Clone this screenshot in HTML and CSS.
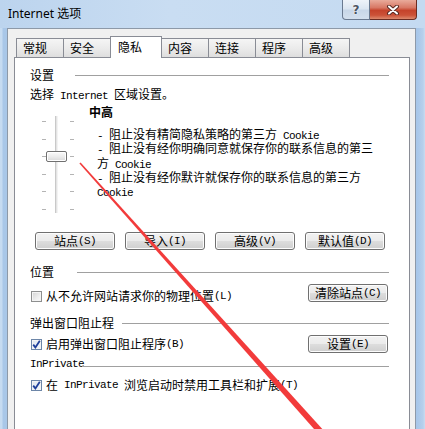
FILE: index.html
```html
<!DOCTYPE html>
<html lang="zh-CN">
<head>
<meta charset="utf-8">
<title>Internet 选项</title>
<link rel="stylesheet" href="styles.css">
</head>
<body>
<div class="window">
  <div class="titlebar">
    <span class="title">Internet 选项</span>
    <div class="caption-btns">
      <div class="cbtn help">?</div>
      <div class="cbtn close">
        <svg width="14" height="10" viewBox="0 0 14 10">
          <path d="M3 1.5 L11 8.5 M11 1.5 L3 8.5" stroke="#5a2a22" stroke-width="4" stroke-linecap="round" fill="none"/>
          <path d="M3 1.5 L11 8.5 M11 1.5 L3 8.5" stroke="#ffffff" stroke-width="2" stroke-linecap="round" fill="none"/>
        </svg>
      </div>
    </div>
  </div>
  <div class="client">
    <div class="tabs">
      <div class="tab">常规</div>
      <div class="tab">安全</div>
      <div class="tab active">隐私</div>
      <div class="tab">内容</div>
      <div class="tab">连接</div>
      <div class="tab">程序</div>
      <div class="tab">高级</div>
    </div>
    <div class="panel">
      <div class="gh"><span class="gh-label w45">设置</span><span class="gh-line"></span></div>
      <div class="line">选择<span class="m"> Internet </span>区域设置。</div>
      <div class="privacy">
        <div class="slider">
          <div class="ticks">
            <div class="tick-row"><i></i><i></i></div>
            <div class="tick-row"><i></i><i></i></div>
            <div class="tick-row"><i></i><i></i></div>
            <div class="tick-row"><i></i><i></i></div>
            <div class="tick-row"><i></i><i></i></div>
            <div class="tick-row"><i></i><i></i></div>
          </div>
          <div class="thumb"></div>
        </div>
        <div class="desc">
          <div class="level">中高</div>
          <div class="items">
            <p class="item"><span class="m">- </span>阻止没有精简隐私策略的第三方<span class="m"> Cookie</span></p>
            <p class="item"><span class="m">- </span>阻止没有经你明确同意就保存你的联系信息的第三<br>方<span class="m"> Cookie</span></p>
            <p class="item"><span class="m">- </span>阻止没有经你默许就保存你的联系信息的第三方<br><span class="m">Cookie</span></p>
          </div>
        </div>
      </div>
      <div class="btn-row">
        <div class="btn">站点<span class="m">(S)</span></div>
        <div class="btn">导入<span class="m">(I)</span></div>
        <div class="btn">高级<span class="m">(V)</span></div>
        <div class="btn">默认值<span class="m">(D)</span></div>
      </div>

      <div class="gh gap14"><span class="gh-label w47">位置</span><span class="gh-line"></span></div>
      <div class="optrow">
        <div class="check off6">
          <span class="cb"></span>从不允许网站请求你的物理位置<span class="m">(L)</span>
        </div>
        <div class="btn side">清除站点<span class="m">(C)</span></div>
      </div>

      <div class="gh gap13"><span class="gh-label w92">弹出窗口阻止程</span><span class="gh-line"></span></div>
      <div class="optrow">
        <div class="check off3">
          <span class="cb on"><svg width="9" height="9" viewBox="0 0 9 9"><path d="M1.2 4.6 L3.4 7.4 L7.8 0.8" stroke="#1f3f9a" stroke-width="1.8" fill="none"/></svg></span>启用弹出窗口阻止程序<span class="m">(B)</span>
        </div>
        <div class="btn side">设置<span class="m">(E)</span></div>
      </div>

      <div class="gh gap3"><span class="gh-label w52 m">InPrivate</span><span class="gh-line low"></span></div>
      <div class="check solo">
        <span class="cb on"><svg width="9" height="9" viewBox="0 0 9 9"><path d="M1.2 4.6 L3.4 7.4 L7.8 0.8" stroke="#1f3f9a" stroke-width="1.8" fill="none"/></svg></span>在<span class="m"> InPrivate </span>浏览启动时禁用工具栏和扩展<span class="m">(T)</span>
      </div>
    </div>
  </div>
  <svg class="annot" width="425" height="429" viewBox="0 0 425 429">
    <polygon points="79.4,163.5 80.6,162.5 330.4,437.9 325.6,442.1" fill="#f23b3b"/>
  </svg>
</div>
</body>
</html>
```

FILE: styles.css
```css
* { box-sizing: border-box; }
html, body { margin: 0; padding: 0; }
body {
  width: 425px;
  height: 429px;
  overflow: hidden;
  font-family: "Noto Sans CJK SC", sans-serif;
  font-size: 12px;
  color: #000;
  background: #b9d1ea;
}
.window {
  position: relative;
  width: 425px;
  height: 429px;
  display: flex;
  flex-direction: column;
  background: linear-gradient(to right, #c6dbf1 0, #c6dbf1 2px, #a9c7e8 3px, #a9c7e8 7px, #a9c7e8 416px, #a7c6e9 417px, #b6d0ec 423px, #c9dcf0 425px);
}
.titlebar {
  height: 28px;
  display: flex;
  align-items: flex-start;
  background: linear-gradient(to bottom, #cadef3 0, #c2d8f0 50%, #b4cfec 100%);
  background: linear-gradient(to right, #bcd4ee 0, #c9ddf2 40%, #c4daf1 100%);
}
.title {
  font-family: "Noto Sans", "Noto Sans CJK SC", sans-serif;
  font-size: 12px;
  line-height: 16px;
  margin: 6px 0 0 8px;
  color: #000;
}
.caption-btns {
  margin-left: auto;
  margin-right: 8px;
  display: flex;
  height: 20px;
}
.cbtn {
  height: 20px;
  display: flex;
  align-items: center;
  justify-content: center;
}
.help {
  width: 28px;
  border: 1px solid #6a7a90;
  border-top: none;
  border-radius: 0 0 0 4px;
  background: linear-gradient(to bottom, #eef3f9 0, #dce6f1 45%, #c8d7e8 55%, #d3e0ee 100%);
  font-family: "DejaVu Sans", sans-serif;
  font-weight: bold;
  font-size: 12px;
  color: #4b5563;
  text-shadow: 0 0 2px #fff, 0 0 1px #fff;
}
.close {
  width: 47px;
  border: 1px solid #6b2c22;
  border-top: none;
  border-left: none;
  border-radius: 0 0 4px 0;
  background: linear-gradient(to bottom, #e9ab9b 0, #d87865 40%, #c5432b 55%, #cc5238 80%, #dd8a6e 100%);
}
.client {
  flex: 1;
  margin: 0 9px 0 7px;
  background: #f0f0f0;
  border: 1px solid #8d99a8;
  border-bottom: none;
  padding: 7px 5px 0 6px;
  display: flex;
  flex-direction: column;
}
.tabs {
  display: flex;
  align-items: flex-end;
  height: 21px;
  padding-left: 2px;
}
.tab {
  width: 48px;
  height: 19px;
  margin-right: -1px;
  border: 1px solid #898c95;
  border-bottom: none;
  background: linear-gradient(to bottom, #f5f5f5 0, #ebebeb 50%, #dedede 100%);
  padding-left: 6px;
  display: flex;
  align-items: center;
  font-size: 12px;
  line-height: 14px;
}
.tab.active {
  width: 52px;
  height: 22px;
  margin-bottom: -1px;
  position: relative;
  z-index: 2;
  background: #fff;
  padding-left: 7px;
  padding-bottom: 2px;
}
.panel {
  flex: 1;
  background: #fff;
  border: 1px solid #898c95;
  border-bottom: none;
  padding: 9px 20px 0 15px;
}
.m {
  font-family: "Liberation Mono", monospace;
  font-size: 11px;
  letter-spacing: -0.6px;
  white-space: pre;
}
.gh {
  display: flex;
  align-items: center;
  height: 16px;
  line-height: 16px;
}
.gh-label { flex: none; white-space: nowrap; }
.w45 { width: 45px; }
.w47 { width: 47px; }
.w92 { width: 92px; }
.w52 { width: 52px; }
.gh-line {
  flex: 1;
  height: 1px;
  background: #a0a0a0;
}
.gh-line.low { margin-top: 4px; }
.gap14 { margin-top: 14px; }
.gap13 { margin-top: 13px; }
.gap3 { margin-top: 3px; }
.line {
  margin-top: 3px;
  height: 16px;
  line-height: 16px;
}
.privacy {
  margin-top: 2px;
  display: flex;
  align-items: flex-start;
}
.slider {
  position: relative;
  flex: none;
  width: 36px;
  height: 97px;
  margin: 12px 0 0 10px;
  background: linear-gradient(to right, transparent 15px, #c9c9c9 15px, #c9c9c9 16px, #e4e4e4 16px, #e4e4e4 17px, #f3f3f3 17px, #f3f3f3 18px, transparent 18px);
}
.ticks {
  height: 94px;
  padding: 5px 2px 0 2px;
  display: flex;
  flex-direction: column;
  justify-content: space-between;
}
.tick-row {
  display: flex;
  justify-content: space-between;
  height: 1px;
}
.tick-row i {
  display: block;
  width: 4px;
  height: 1px;
  background: #b4b4b4;
}
.thumb {
  position: absolute;
  left: 6px;
  top: 35px;
  width: 21px;
  height: 11px;
  border: 1px solid #707070;
  border-radius: 2px;
  background: linear-gradient(to bottom, #fbfbfb 0, #ececec 50%, #d8d8d8 100%);
  box-shadow: inset 0 0 0 1px #fff;
}
.desc {
  margin-left: 13px;
}
.level {
  height: 16px;
  line-height: 16px;
  font-weight: bold;
}
.items {
  margin: 8px 0 0 8px;
}
.item {
  margin: 0;
  line-height: 12.3px;
  white-space: nowrap;
}
.btn-row {
  display: flex;
  gap: 10px;
  margin-top: 19px;
  padding-left: 5px;
}
.btn {
  width: 80px;
  height: 18px;
  border: 1px solid #707070;
  border-radius: 3px;
  background: linear-gradient(to bottom, #f2f2f2 0, #ebebeb 48%, #dddddd 52%, #cfcfcf 100%);
  box-shadow: inset 0 0 0 1px #fcfcfc;
  display: flex;
  align-items: center;
  justify-content: center;
  line-height: 14px;
  white-space: nowrap;
}
.optrow {
  display: flex;
  justify-content: space-between;
  align-items: flex-start;
  margin-top: 4px;
}
.btn.side { margin-right: 1px; }
.check {
  display: flex;
  align-items: center;
  height: 12px;
  line-height: 12px;
  white-space: nowrap;
}
.off6 { margin-top: 6px; }
.off3 { margin-top: 3px; }
.solo { margin-top: 7px; }
.cb {
  flex: none;
  width: 11px;
  height: 11px;
  margin: 0 4px 0 1px;
  border: 1px solid #8e8f8f;
  background: linear-gradient(135deg, #d2d2d2 0, #eeeeee 60%, #fafafa 100%);
  box-shadow: inset 0 0 0 1px #f4f4f4;
  display: flex;
  align-items: center;
  justify-content: center;
}
.cb.on {
  border-color: #6d86a8;
  background: linear-gradient(135deg, #dfe6ef 0, #f4f7fa 100%);
}
.annot {
  position: absolute;
  left: 0;
  top: 0;
  pointer-events: none;
}
```
